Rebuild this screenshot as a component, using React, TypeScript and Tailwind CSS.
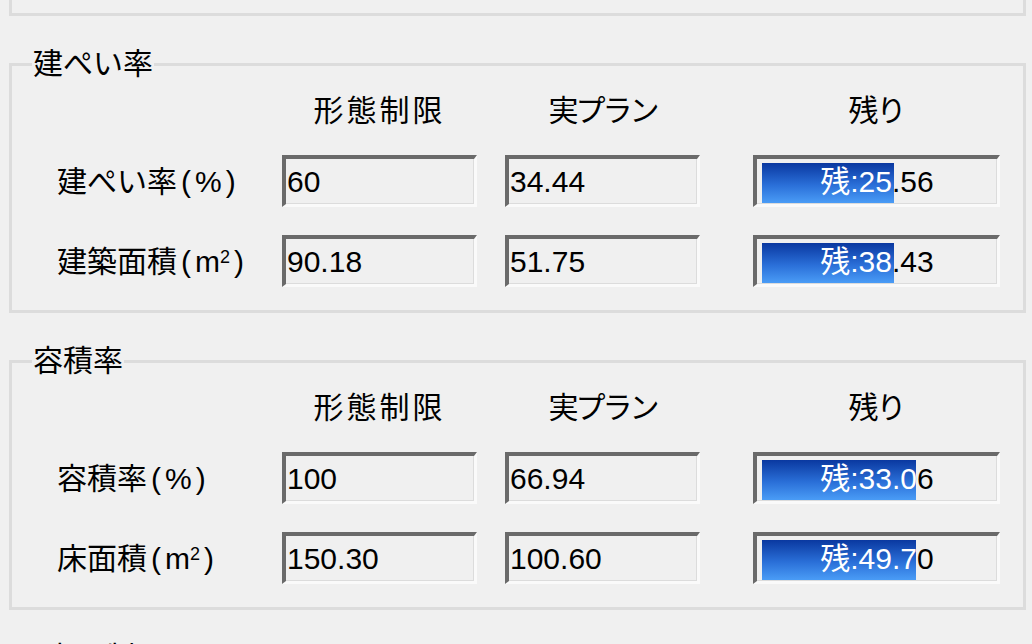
import type { ReactNode } from "react";

const font = { fontFamily: '"Liberation Sans", "Noto Sans CJK JP", sans-serif' };

type Row = { label: ReactNode; limit: string; plan: string; rest: string; used: number };

function Unit({ name, children }: { name: string; children: ReactNode }) {
  return (
    <>
      {name}
      <span className="mx-[4px]">(</span>
      {children}
      <span className="mx-[4px]">)</span>
    </>
  );
}

const groups: { title: string; rows: Row[] }[] = [
  {
    title: "建ぺい率",
    rows: [
      { label: <Unit name="建ぺい率">%</Unit>, limit: "60", plan: "34.44", rest: "25.56", used: 34.44 / 60 },
      {
        label: (
          <Unit name="建築面積">
            m<sup className="text-[18px]">2</sup>
          </Unit>
        ),
        limit: "90.18",
        plan: "51.75",
        rest: "38.43",
        used: 51.75 / 90.18,
      },
    ],
  },
  {
    title: "容積率",
    rows: [
      { label: <Unit name="容積率">%</Unit>, limit: "100", plan: "66.94", rest: "33.06", used: 66.94 / 100 },
      {
        label: (
          <Unit name="床面積">
            m<sup className="text-[18px]">2</sup>
          </Unit>
        ),
        limit: "150.30",
        plan: "100.60",
        rest: "49.70",
        used: 100.6 / 150.3,
      },
    ],
  },
];

function Field({ value }: { value: string }) {
  return (
    <div className="flex h-[52px] w-[195px] items-center border-t-[4px] border-l-[4px] border-r-[3px] border-b-[3px] border-t-[#6a6a6a] border-l-[#6a6a6a] border-r-[#fafafa] border-b-[#fafafa] bg-[#f0f0f0] pl-[1px] text-[30px] text-black shadow-[inset_-1px_-1px_0_#dcdcdc]">
      {value}
    </div>
  );
}

function Remain({ value, used }: { value: string; used: number }) {
  const label = `残:${value}`;
  return (
    <div className="relative h-[52px] w-[247px] border-t-[4px] border-l-[4px] border-r-[3px] border-b-[3px] border-t-[#6a6a6a] border-l-[#6a6a6a] border-r-[#fafafa] border-b-[#fafafa] bg-[#f0f0f0] text-[30px] shadow-[inset_-1px_-1px_0_#dcdcdc]">
      <div className="absolute inset-0 flex items-center justify-center text-black">{label}</div>
      <div
        className="absolute top-[4px] bottom-[1px] left-[5px] overflow-hidden bg-[linear-gradient(to_bottom,#0a38a0,#2a6fd8_55%,#4a9cf6)]"
        style={{ width: Math.round(used * 230) }}
      >
        <div className="-mt-[4px] -ml-[5px] flex h-[45px] w-[240px] items-center justify-center text-white">{label}</div>
      </div>
    </div>
  );
}

function Group({ title, rows }: { title: string; rows: Row[] }) {
  return (
    <section className="relative mt-[47px] ml-[9px] mr-[6px] h-[250px] border-[3px] border-[#dcdcdc]">
      <span className="absolute -top-[20px] left-[20px] bg-[#f0f0f0] px-[1px] text-[30px] leading-[36px] text-black">{title}</span>
      <div className="mt-[24px] flex h-[40px] items-center text-[30px] text-black">
        <div className="w-[270px]" />
        <div className="w-[195px] text-center tracking-[3px]">形態制限</div>
        <div className="ml-[28px] w-[195px] text-center tracking-[-3px]">実プラン</div>
        <div className="ml-[53px] w-[247px] text-center tracking-[-2px]">残り</div>
      </div>
      <div className="mt-[25px] flex flex-col gap-[28px]">
        {rows.map((row, i) => (
          <div key={i} className="flex items-center">
            <div className="w-[270px] pl-[45px] text-[30px] text-black">{row.label}</div>
            <Field value={row.limit} />
            <div className="ml-[28px]">
              <Field value={row.plan} />
            </div>
            <div className="ml-[53px]">
              <Remain value={row.rest} used={row.used} />
            </div>
          </div>
        ))}
      </div>
    </section>
  );
}

export default function App() {
  return (
    <div className="h-[644px] w-[1032px] overflow-hidden bg-[#f0f0f0]" style={font}>
      <div className="ml-[9px] mr-[6px] h-[16px] border-x-[3px] border-b-[3px] border-[#dcdcdc]" />
      {groups.map((g) => (
        <Group key={g.title} title={g.title} rows={g.rows} />
      ))}
      <div className="mt-[30px] pl-[45px] text-[30px] leading-[36px] text-black">高さ制限</div>
    </div>
  );
}
